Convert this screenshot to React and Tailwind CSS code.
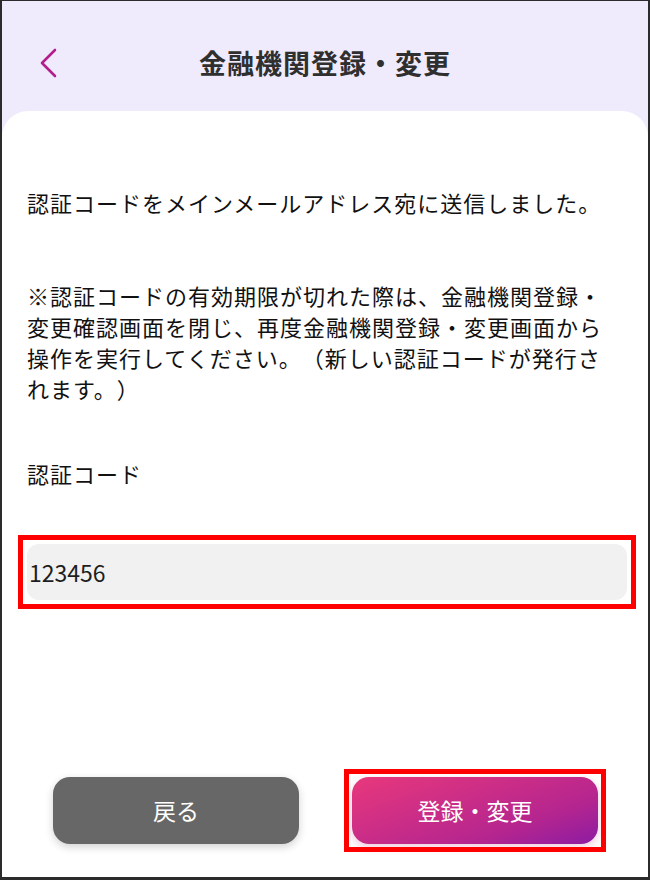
import React, { useState } from 'react';

const jp = { fontFamily: '"Noto Sans CJK JP", "Noto Sans", sans-serif' };

// 認証コード入力画面（金融機関登録・変更）
export default function App() {
  const [code, setCode] = useState('123456');

  return (
    <div
      className="w-[650px] h-[880px] flex flex-col bg-[#efeafc] border-[#2b2b2b] border-l-2 border-r-2 border-t border-b-[3px] overflow-hidden [text-spacing-trim:space-all]"
      style={jp}
    >
      {/* ヘッダー */}
      <header className="relative h-[110px] shrink-0 flex items-center justify-center">
        <button className="absolute left-[34px] top-[44px] w-[24px] h-[36px] flex items-center justify-center">
          <svg width="20" height="32" viewBox="0 0 20 32" fill="none">
            <path d="M17 3 L4 16 L17 29" stroke="#b21f8c" strokeWidth="2.6" strokeLinecap="round" strokeLinejoin="round" />
          </svg>
        </button>
        <h1 className="text-[27px] font-bold text-[#2f2f2f] tracking-[1px] mt-[14px]">金融機関登録・変更</h1>
      </header>

      {/* 本文 */}
      <main className="flex-1 flex flex-col bg-white rounded-t-[26px] pl-[25px] pr-[22px] pt-[76px]">
        <p className="text-[22px] leading-[31px] tracking-[1px] text-[#111]">
          認証コードをメインメールアドレス宛に送信しました。
        </p>
        <p className="mt-[62px] text-[22px] leading-[31px] tracking-[1px] text-[#111]">
          ※認証コードの有効期限が切れた際は、金融機関登録・<br />
          変更確認画面を閉じ、再度金融機関登録・変更画面から<br />
          操作を実行してください。（新しい認証コードが発行さ<br />
          れます。）
        </p>
        <p className="mt-[54px] text-[22px] leading-[31px] tracking-[1px] text-[#111]">認証コード</p>

        <div className="relative mt-[55px] mr-[-1px]">
          <input
            value={code}
            onChange={e => setCode(e.target.value)}
            className="w-full h-[56px] rounded-[12px] bg-[#f1f1f1] pl-[2px] text-[23px] text-[#1e1e1e] outline-none"
            style={jp}
          />
          <div className="absolute -inset-[9px] border-[5px] border-[#ff0000] pointer-events-none" />
        </div>

        <div className="flex-1" />

        <div className="flex items-center gap-[53px] pl-[26px] mb-[33px]">
          <button className="w-[246px] h-[67px] rounded-[17px] bg-[#676767] text-white text-[23px] shadow-[0_3px_8px_rgba(0,0,0,0.18)]">
            戻る
          </button>
          <div className="relative">
            <button className="w-[246px] h-[67px] rounded-[17px] bg-linear-[160deg] from-[#e8387c] via-[#b5258f] via-70% to-[#8c1ca3] text-white text-[23px] shadow-[0_3px_8px_rgba(200,40,120,0.25)]">
              登録・変更
            </button>
            <div className="absolute -inset-[8px] border-[5px] border-[#ff0000] pointer-events-none" />
          </div>
        </div>
      </main>
    </div>
  );
}
